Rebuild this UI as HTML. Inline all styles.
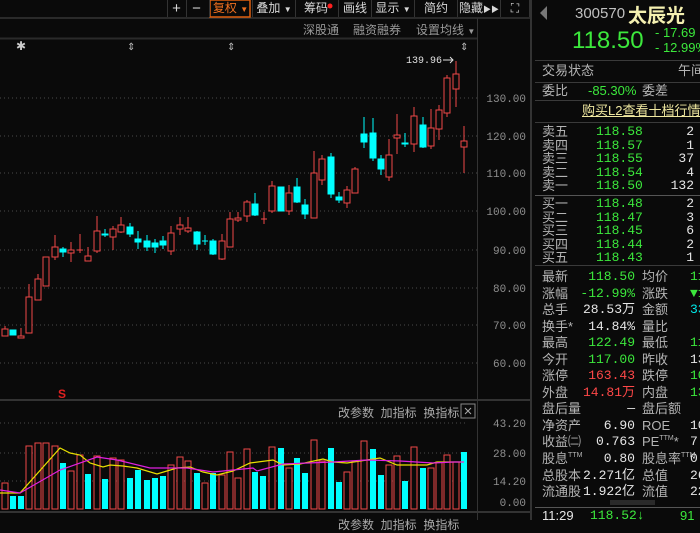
<!DOCTYPE html>
<html><head><meta charset="utf-8"><style>
*{margin:0;padding:0;box-sizing:border-box}
body{width:700px;height:520px;background:#0a0a0a;overflow:hidden;position:relative;font-family:"Liberation Sans","Noto Sans CJK SC",sans-serif;color:#c8c8c8}
.a{position:absolute;white-space:nowrap}
.tb{position:absolute;top:0;height:17px;font-size:12px;line-height:17px;text-align:center;color:#d8d8d8;border-left:1px solid #333}
.rp{font-size:13px;line-height:14px}
.g{color:#3ce83c}.w{color:#e6e6e6}.r{color:#ff4848}.c{color:#00e8e8}.l{color:#b4b4b4}
.mono{font-family:"Liberation Mono",monospace}
.sp{font-size:7px;line-height:0;position:relative;top:-6px}
.rows div{height:16.55px;line-height:16.55px;overflow:visible}
</style></head><body>
<svg class="a" style="left:0;top:0" width="700" height="520">
<line x1="0" y1="18" x2="532" y2="18" stroke="#2a2a2a" stroke-width="2"/>
<line x1="0" y1="38.5" x2="478" y2="38.5" stroke="#2a2a2a" stroke-width="2"/>
<line x1="477.5" y1="18" x2="477.5" y2="520" stroke="#333"/>
<line x1="531" y1="0" x2="531" y2="520" stroke="#333" stroke-width="2"/>
<line x1="0" y1="400" x2="531" y2="400" stroke="#333" stroke-width="2"/>
<line x1="0" y1="512" x2="531" y2="512" stroke="#333" stroke-width="2"/>
<g stroke="#4a4a4a" stroke-dasharray="1 3">
<line x1="0" y1="98" x2="477" y2="98"/><line x1="0" y1="136" x2="477" y2="136"/><line x1="0" y1="173" x2="477" y2="173"/><line x1="0" y1="211" x2="477" y2="211"/><line x1="0" y1="250" x2="477" y2="250"/><line x1="0" y1="288" x2="477" y2="288"/><line x1="0" y1="325" x2="477" y2="325"/><line x1="0" y1="363" x2="477" y2="363"/>
<line x1="0" y1="423" x2="467" y2="423"/><line x1="0" y1="453" x2="467" y2="453"/><line x1="0" y1="481" x2="467" y2="481"/>
</g>
<g font-family="Liberation Mono,monospace" font-size="11" fill="#909090" text-anchor="end">
<text x="526" y="102">130.00</text><text x="526" y="140">120.00</text><text x="526" y="177">110.00</text><text x="526" y="215">100.00</text><text x="526" y="254">90.00</text><text x="526" y="292">80.00</text><text x="526" y="329">70.00</text><text x="526" y="367">60.00</text>
<text x="526" y="427">43.20</text><text x="526" y="457">28.00</text><text x="526" y="485">14.20</text><text x="526" y="506">0.00</text>
</g>
<text x="406" y="63" font-family="Liberation Mono,monospace" font-size="10" fill="#e0e0e0">139.96</text>
<path d="M443 60h10m-3-3l3 3-3 3" stroke="#e0e0e0" fill="none"/>
<text x="16" y="50" font-size="12" fill="#ccc">✱</text>
<g fill="#bbb" font-size="10"><text x="127" y="50">⇕</text><text x="227" y="50">⇕</text><text x="460" y="50">⇕</text></g>
<text x="58" y="398" font-size="12" fill="#e02020" font-weight="bold">S</text>
<g stroke="#f04848" stroke-width="1" fill="#0a0a0a">
<line x1="5" y1="326" x2="5" y2="336"/><rect x="2" y="329" width="6" height="7"/>
<line x1="21" y1="328" x2="21" y2="338"/><rect x="18" y="336" width="6" height="2"/>
<line x1="29" y1="284" x2="29" y2="333"/><rect x="26" y="297" width="6" height="36"/>
<line x1="38" y1="274" x2="38" y2="300"/><rect x="35" y="279" width="6" height="21"/>
<rect x="43" y="257" width="6" height="29"/>
<line x1="55" y1="235" x2="55" y2="260"/><rect x="52" y="247" width="6" height="10"/>
<line x1="71" y1="242" x2="71" y2="262"/><rect x="68" y="250" width="6" height="3"/>
<line x1="80" y1="234" x2="80" y2="253"/><line x1="77" y1="250" x2="83" y2="250"/>
<line x1="88" y1="247" x2="88" y2="261"/><rect x="85" y="256" width="6" height="5"/>
<line x1="97" y1="216" x2="97" y2="253"/><rect x="94" y="231" width="6" height="20"/>
<line x1="113" y1="226" x2="113" y2="250"/><rect x="110" y="229" width="6" height="8"/>
<line x1="121" y1="217" x2="121" y2="233"/><rect x="118" y="225" width="6" height="7"/>
<line x1="171" y1="226" x2="171" y2="255"/><rect x="168" y="233" width="6" height="18"/>
<line x1="180" y1="217" x2="180" y2="235"/><rect x="177" y="225" width="6" height="4"/>
<line x1="188" y1="217" x2="188" y2="233"/><rect x="185" y="228" width="6" height="3"/>
<line x1="222" y1="234" x2="222" y2="260"/><rect x="219" y="241" width="6" height="18"/>
<line x1="230" y1="212" x2="230" y2="247"/><rect x="227" y="219" width="6" height="28"/>
<line x1="238" y1="212" x2="238" y2="222"/><rect x="235" y="218" width="6" height="2"/>
<line x1="247" y1="200" x2="247" y2="222"/><rect x="244" y="202" width="6" height="14"/>
<line x1="264" y1="212" x2="264" y2="224"/><line x1="261" y1="219" x2="267" y2="219"/>
<line x1="272" y1="181" x2="272" y2="213"/><rect x="269" y="186" width="6" height="25"/>
<line x1="289" y1="185" x2="289" y2="215"/><rect x="286" y="193" width="6" height="18"/>
<line x1="314" y1="151" x2="314" y2="218"/><rect x="311" y="173" width="6" height="45"/>
<line x1="322" y1="155" x2="322" y2="185"/><rect x="319" y="159" width="6" height="21"/>
<line x1="347" y1="186" x2="347" y2="208"/><rect x="344" y="190" width="6" height="13"/>
<line x1="355" y1="167" x2="355" y2="193"/><rect x="352" y="169" width="6" height="24"/>
<line x1="389" y1="139" x2="389" y2="181"/><rect x="386" y="155" width="6" height="22"/>
<line x1="397" y1="114" x2="397" y2="154"/><rect x="394" y="135" width="6" height="3"/>
<line x1="414" y1="107" x2="414" y2="152"/><rect x="411" y="116" width="6" height="28"/>
<line x1="431" y1="109" x2="431" y2="149"/><rect x="428" y="128" width="6" height="18"/>
<line x1="439" y1="105" x2="439" y2="140"/><rect x="436" y="110" width="6" height="19"/>
<line x1="447" y1="75" x2="447" y2="117"/><rect x="444" y="78" width="6" height="35"/>
<line x1="456" y1="61" x2="456" y2="107"/><rect x="453" y="74" width="6" height="15"/>
<line x1="464" y1="126" x2="464" y2="173"/><rect x="461" y="141" width="6" height="6"/>
</g>
<g stroke="#00ffff" fill="#00ffff">
<rect x="10" y="330" width="6" height="5"/>
<line x1="63" y1="247" x2="63" y2="257"/><rect x="60" y="249" width="6" height="3"/>
<line x1="105" y1="229" x2="105" y2="237"/><rect x="102" y="234" width="6" height="1"/>
<line x1="130" y1="223" x2="130" y2="237"/><rect x="127" y="227" width="6" height="7"/>
<line x1="138" y1="231" x2="138" y2="249"/><rect x="135" y="239" width="6" height="3"/>
<line x1="147" y1="235" x2="147" y2="251"/><rect x="144" y="241" width="6" height="6"/>
<line x1="155" y1="239" x2="155" y2="253"/><rect x="152" y="243" width="6" height="4"/>
<line x1="163" y1="236" x2="163" y2="249"/><rect x="160" y="241" width="6" height="4"/>
<line x1="197" y1="231" x2="197" y2="250"/><rect x="194" y="232" width="6" height="12"/>
<line x1="205" y1="235" x2="205" y2="245"/><line x1="202" y1="241" x2="208" y2="241"/>
<line x1="213" y1="239" x2="213" y2="255"/><rect x="210" y="241" width="6" height="13"/>
<line x1="255" y1="193" x2="255" y2="216"/><rect x="252" y="204" width="6" height="11"/>
<rect x="278" y="187" width="6" height="24"/>
<line x1="297" y1="178" x2="297" y2="203"/><rect x="294" y="187" width="6" height="15"/>
<line x1="305" y1="199" x2="305" y2="219"/><rect x="302" y="205" width="6" height="9"/>
<line x1="331" y1="153" x2="331" y2="198"/><rect x="328" y="157" width="6" height="37"/>
<line x1="339" y1="192" x2="339" y2="203"/><rect x="336" y="197" width="6" height="3"/>
<line x1="364" y1="117" x2="364" y2="148"/><rect x="361" y="134" width="6" height="8"/>
<line x1="373" y1="118" x2="373" y2="161"/><rect x="370" y="133" width="6" height="25"/>
<line x1="381" y1="155" x2="381" y2="175"/><rect x="378" y="159" width="6" height="10"/>
<line x1="405" y1="133" x2="405" y2="147"/><rect x="402" y="143" width="6" height="1"/>
<line x1="423" y1="117" x2="423" y2="148"/><rect x="420" y="125" width="6" height="22"/>
</g>
<g stroke="#f04848" fill="#0a0a0a">
<rect x="2" y="483" width="6" height="26"/><rect x="26" y="446" width="6" height="63"/><rect x="35" y="443" width="6" height="66"/><rect x="43" y="443" width="6" height="66"/><rect x="52" y="446" width="6" height="63"/><rect x="68" y="471" width="6" height="38"/><rect x="77" y="455" width="6" height="54"/><rect x="94" y="456" width="6" height="53"/><rect x="110" y="458" width="6" height="51"/><rect x="118" y="460" width="6" height="49"/><rect x="168" y="465" width="6" height="44"/><rect x="177" y="457" width="6" height="52"/><rect x="185" y="461" width="6" height="48"/><rect x="202" y="483" width="6" height="26"/><rect x="219" y="475" width="6" height="34"/><rect x="227" y="452" width="6" height="57"/><rect x="235" y="478" width="6" height="31"/><rect x="244" y="449" width="6" height="60"/><rect x="269" y="447" width="6" height="62"/><rect x="286" y="468" width="6" height="41"/><rect x="311" y="440" width="6" height="69"/><rect x="319" y="461" width="6" height="48"/><rect x="344" y="472" width="6" height="37"/><rect x="352" y="461" width="6" height="48"/><rect x="361" y="441" width="6" height="68"/><rect x="386" y="465" width="6" height="44"/><rect x="394" y="456" width="6" height="53"/><rect x="411" y="447" width="6" height="62"/><rect x="428" y="468" width="6" height="41"/><rect x="436" y="462" width="6" height="47"/><rect x="444" y="455" width="6" height="54"/><rect x="453" y="462" width="6" height="47"/>
</g>
<g fill="#00ffff">
<rect x="10" y="496" width="6" height="13"/><rect x="18" y="496" width="6" height="13"/><rect x="60" y="463" width="6" height="46"/><rect x="85" y="474" width="6" height="35"/><rect x="102" y="479" width="6" height="30"/><rect x="127" y="478" width="6" height="31"/><rect x="135" y="470" width="6" height="39"/><rect x="144" y="480" width="6" height="29"/><rect x="152" y="478" width="6" height="31"/><rect x="160" y="476" width="6" height="33"/><rect x="194" y="473" width="6" height="36"/><rect x="210" y="473" width="6" height="36"/><rect x="252" y="472" width="6" height="37"/><rect x="260" y="476" width="6" height="33"/><rect x="278" y="448" width="6" height="61"/><rect x="294" y="458" width="6" height="51"/><rect x="302" y="473" width="6" height="36"/><rect x="328" y="448" width="6" height="61"/><rect x="336" y="482" width="6" height="27"/><rect x="370" y="449" width="6" height="60"/><rect x="378" y="475" width="6" height="34"/><rect x="402" y="481" width="6" height="28"/><rect x="420" y="468" width="6" height="41"/><rect x="461" y="452" width="6" height="57"/>
</g>
<polyline fill="none" stroke="#e8e000" stroke-width="1.2" points="0,493 7,493 20,493 60,448 70,453 80,455 90,463 103,467 110,465 123,466 137,468 157,474 177,468 190,467 203,472 217,475 233,471 250,463 273,460 283,465 300,464 323,459 333,462 347,463 367,460 380,458 397,465 427,465 437,462 453,462 464,462"/>
<polyline fill="none" stroke="#e020e0" stroke-width="1.2" points="0,490 20,493 60,470 97,457 117,460 150,468 187,468 213,472 253,468 257,471 283,464 333,462 367,460 400,461 433,463 453,462 464,462"/>
<rect x="461" y="404" width="14" height="14" fill="none" stroke="#888"/>
<path d="M465 408l6 6m0-6l-6 6" stroke="#aaa"/>
<polygon points="547,6 547,20 540,13" fill="#777"/>
<rect x="210" y="0" width="40" height="17" fill="none" stroke="#e0600f" stroke-width="1.5"/>
<circle cx="330" cy="6" r="2.5" fill="#ff2020"/>
</svg>
<div class="tb" style="left:167px;width:18px;font-size:15px">+</div>
<div class="tb" style="left:186px;width:20px;font-size:15px">−</div>
<div class="tb" style="left:209px;width:42px;color:#f07020">复权 <span style="font-size:8px">▼</span></div>
<div class="tb" style="left:252px;width:43px">叠加 <span style="font-size:8px">▼</span></div>
<div class="tb" style="left:295px;width:43px;text-align:left;padding-left:8px">筹码</div>
<div class="tb" style="left:338px;width:33px">画线</div>
<div class="tb" style="left:371px;width:43px">显示 <span style="font-size:8px">▼</span></div>
<div class="tb" style="left:414px;width:43px">简约</div>
<div class="tb" style="left:457px;width:43px">隐藏<span style="font-size:8px">▶▶</span></div>
<div class="tb" style="left:500px;width:30px;border-right:1px solid #333">⛶</div>
<div class="a" style="left:303px;top:21px;font-size:12px;color:#999">深股通</div>
<div class="a" style="left:353px;top:21px;font-size:12px;color:#999">融资融券</div>
<div class="a" style="left:416px;top:21px;font-size:12px;color:#999">设置均线 <span style="font-size:8px">▼</span></div>
<div class="a" style="left:338px;top:404px;font-size:12px;color:#aaa">改参数&nbsp; 加指标&nbsp; 换指标</div>
<div class="a" style="left:338px;top:516px;font-size:12px;color:#aaa">改参数&nbsp; 加指标&nbsp; 换指标</div>
<div class="a" style="left:575px;top:5px;font-size:15px;color:#c0c0c0">300570</div>
<div class="a" style="left:628px;top:1px;font-size:19px;color:#f4f0b0;font-weight:bold">太辰光</div>
<div class="a g" style="left:572px;top:27px;font-size:24px">118.50</div>
<div class="a g" style="left:655px;top:25px;font-size:13px">- 17.69</div>
<div class="a g" style="left:655px;top:40px;font-size:13px">- 12.99%</div>
<div class="a" style="left:535px;top:60px;width:165px;border-top:1px solid #3a3a3a"></div>
<div class="a rp l" style="left:542px;top:64px">交易状态</div><div class="a rp l" style="left:678px;top:64px">午间</div>
<div class="a" style="left:535px;top:82px;width:165px;border-top:1px solid #3a3a3a"></div>
<div class="a rp l" style="left:542px;top:84px">委比</div><div class="a rp g" style="left:588px;top:84px">-85.30%</div><div class="a rp l" style="left:642px;top:84px">委差</div>
<div class="a" style="left:535px;top:100px;width:165px;border-top:1px solid #3a3a3a"></div>
<div class="a rp" style="left:582px;top:104px;color:#f0e8a0;text-decoration:underline">购买L2查看十档行情</div>
<div class="a" style="left:535px;top:122px;width:165px;border-top:1px solid #3a3a3a"></div>
<div class="a rp l" style="left:542px;top:125px;line-height:13.5px">卖五<br>卖四<br>卖三<br>卖二<br>卖一</div>
<div class="a rp g mono" style="left:596px;top:125px;line-height:13.5px;font-size:13px">118.58<br>118.57<br>118.55<br>118.54<br>118.50</div>
<div class="a rp w mono" style="left:640px;top:125px;width:54px;text-align:right;line-height:13.5px">2<br>1<br>37<br>4<br>132</div>
<div class="a" style="left:535px;top:195px;width:165px;border-top:1px solid #555"></div>
<div class="a rp l" style="left:542px;top:197px;line-height:13.5px">买一<br>买二<br>买三<br>买四<br>买五</div>
<div class="a rp g mono" style="left:596px;top:197px;line-height:13.5px">118.48<br>118.47<br>118.45<br>118.44<br>118.43</div>
<div class="a rp w mono" style="left:640px;top:197px;width:54px;text-align:right;line-height:13.5px">2<br>3<br>6<br>2<br>1</div>
<div class="a" style="left:535px;top:265px;width:165px;border-top:1px solid #3a3a3a"></div>
<div class="a rp l rows" style="left:542px;top:269px"><div>最新</div><div>涨幅</div><div>总手</div><div>换手*</div><div>最高</div><div>今开</div><div>涨停</div><div>外盘</div><div>盘后量</div><div>净资产</div><div>收益㈡</div><div>股息<span class="sp">TTM</span></div><div>总股本</div><div>流通股</div></div>
<div class="a rp mono rows" style="left:570px;top:269px;width:65px;text-align:right"><div class="g">118.50</div><div class="g">-12.99%</div><div class="w">28.53万</div><div class="w">14.84%</div><div class="g">122.49</div><div class="g">117.00</div><div class="r">163.43</div><div class="r">14.81万</div><div class="w">—</div><div class="w">6.90</div><div class="w">0.763</div><div class="w">0.80</div><div class="w">2.271亿</div><div class="w">1.922亿</div></div>
<div class="a rp l rows" style="left:642px;top:269px"><div>均价</div><div>涨跌</div><div>金额</div><div>量比</div><div>最低</div><div>昨收</div><div>跌停</div><div>内盘</div><div>盘后额</div><div>ROE</div><div>PE<span class="sp">TTM</span>*</div><div>股息率<span class="sp">TTM</span></div><div>总值</div><div>流值</div></div>
<div class="a rp mono rows" style="left:690px;top:269px"><div class="g">11</div><div class="g">▼1</div><div class="c">33</div><div>&nbsp;</div><div class="g">11</div><div class="w">13</div><div class="g">10</div><div class="g">13.</div><div>&nbsp;</div><div class="w">10</div><div class="w">7</div><div class="w">0</div><div class="w">26</div><div class="w">22</div></div>
<div class="a" style="left:610px;top:500px;width:45px;height:5px;background:#2a2a2a"></div>
<div class="a" style="left:535px;top:507px;width:165px;border-top:1px solid #555"></div>
<div class="a rp w" style="left:542px;top:509px">11:29</div>
<div class="a rp g mono" style="left:590px;top:509px">118.52↓</div>
<div class="a rp g" style="left:680px;top:509px">91</div>
</body></html>
